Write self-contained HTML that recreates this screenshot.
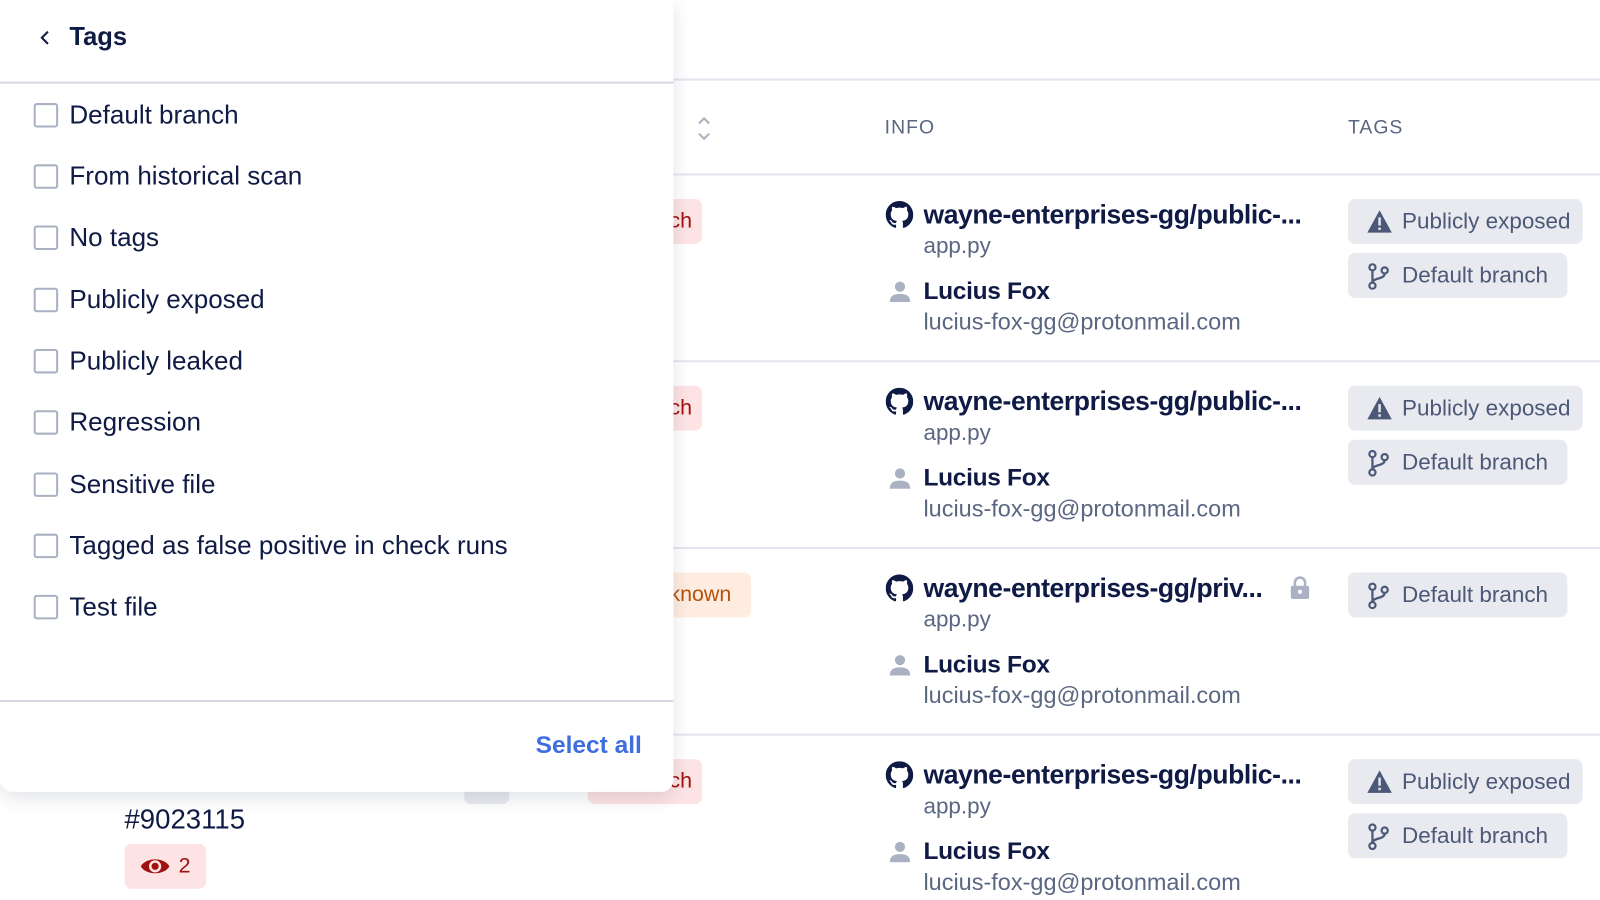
<!DOCTYPE html>
<html><head><meta charset="utf-8"><style>
*{margin:0;padding:0;box-sizing:border-box}
body{width:1600px;height:900px;background:#fff;font-family:"Liberation Sans",sans-serif;color:#0f1a45;position:relative;overflow:hidden}
#w{position:absolute;left:0;top:0;width:1568px;height:882px;transform:scale(1.0204);transform-origin:0 0}
.a{position:absolute;white-space:nowrap}
.hl{position:absolute;height:2px;background:#e3e6ee}
.th{font-size:19px;color:#5a6782;letter-spacing:1px}
.repo{font-size:26px;font-weight:bold;letter-spacing:-0.4px;color:#0f1a45}
.file{font-size:22px;color:#5a6782}
.name{font-size:24px;font-weight:bold;color:#0f1a45;letter-spacing:-0.3px}
.mail{font-size:23px;color:#5a6782}
.tag{position:absolute;height:44px;background:#e8eaef;border-radius:7px;font-size:22px;color:#4b5878;padding-left:53px;line-height:44px;white-space:nowrap}
.tag svg{position:absolute;left:18px;top:10px}
.badge{position:absolute;height:44px;border-radius:7px;font-size:21px;line-height:44px}
.panel{position:absolute;left:0;top:0;width:660px;height:776px;background:#fff;border-radius:0 0 12px 12px;box-shadow:0 6px 18px rgba(20,30,60,.12)}
.item{position:absolute;left:33px;font-size:25.5px;color:#0f1a45;height:26px;line-height:26px}
.item i{position:absolute;left:0;top:1px;width:24px;height:24px;border:2px solid #a9b1c3;border-radius:3px}
.item span{position:absolute;left:35px;top:0px;white-space:nowrap}
</style></head><body><div id="w">

<div class="hl" style="left:600px;top:77px;width:1000px"></div>
<div class="a th" style="left:867px;top:115px">INFO</div>
<div class="a th" style="left:1321px;top:115px">TAGS</div>
<svg class="a" style="left:682px;top:113px" width="16" height="26" viewBox="0 0 16 26"><path d="M3 8l5-5 5 5M3 18l5 5 5-5" fill="none" stroke="#a9b1c3" stroke-width="2"/></svg>
<div class="hl" style="left:600px;top:170px;width:1000px"></div>
<div class="hl" style="left:600px;top:353px;width:1000px"></div>
<div class="hl" style="left:600px;top:536px;width:1000px"></div>
<div class="hl" style="left:600px;top:719px;width:1000px"></div>

<div class="badge" style="left:576px;top:195px;width:112px;background:#fde3e3;color:#a01010;padding-left:80px">ch</div>
<div class="badge" style="left:576px;top:378px;width:112px;background:#fde3e3;color:#a01010;padding-left:80px">ch</div>
<div class="badge" style="left:576px;top:561px;width:160px;background:#fdecdf;color:#b5520c;padding-left:80px">known</div>
<div class="badge" style="left:576px;top:744px;width:112px;background:#fde3e3;color:#a01010;padding-left:80px">ch</div>
<div class="a" style="left:455px;top:752px;width:44px;height:36px;background:#e8eaef;border-radius:6px"></div>
<div class="a" style="left:122px;top:788px;font-size:27px;color:#0f1a45">#9023115</div>
<div class="badge" style="left:122px;top:827px;width:80px;background:#fde3e3;color:#a01010;padding-left:53px">2</div>
<svg class="a" style="left:137px;top:838px" width="30" height="22" viewBox="0 0 30 22"><path d="M1 11C6 2 24 2 29 11 24 20 6 20 1 11z" fill="#a01010"/><circle cx="15" cy="11" r="6" fill="#fde3e3"/><circle cx="15" cy="11" r="3.5" fill="#a01010"/></svg>

<!-- Row 1 -->
<svg class="a" style="left:868px;top:197px" width="27" height="27" viewBox="0 0 16 16"><path fill="#0f1a45" d="M8 0C3.58 0 0 3.58 0 8c0 3.54 2.29 6.53 5.47 7.59.4.07.55-.17.55-.38 0-.19-.01-.82-.01-1.49-2.01.37-2.53-.49-2.69-.94-.09-.23-.48-.94-.82-1.13-.28-.15-.68-.52-.01-.53.63-.01 1.08.58 1.23.82.72 1.21 1.87.87 2.33.66.07-.52.28-.87.51-1.070-1.78-.2-3.64-.89-3.64-3.95 0-.87.31-1.59.82-2.15-.08-.2-.36-1.02.08-2.12 0 0 .67-.21 2.2.82.64-.18 1.32-.27 2-.27.68 0 1.36.09 2 .27 1.53-1.04 2.2-.82 2.2-.82.44 1.1.16 1.92.08 2.12.51.56.82 1.27.82 2.15 0 3.07-1.87 3.75-3.65 3.95.29.25.54.73.54 1.48 0 1.07-.01 1.93-.01 2.2 0 .21.15.46.55.38A8.01 8.01 0 0016 8c0-4.42-3.58-8-8-8z"/></svg>
<div class="a repo" style="left:905px;top:195px">wayne-enterprises-gg/public-...</div>
<div class="a file" style="left:905px;top:228px">app.py</div>
<svg class="a" style="left:871px;top:275px" width="22" height="22" viewBox="0 0 22 22"><circle cx="11" cy="6" r="5" fill="#a9b1c3"/><path d="M1 21c0-6 4-8 10-8s10 2 10 8z" fill="#a9b1c3"/></svg>
<div class="a name" style="left:905px;top:272px">Lucius Fox</div>
<div class="a mail" style="left:905px;top:302px">lucius-fox-gg@protonmail.com</div>
<div class="tag" style="left:1321px;top:195px;width:230px"><svg width="26" height="24" viewBox="0 0 26 24"><path d="M13 1L25 23H1z" fill="#4b5878"/><rect x="11.8" y="8" width="2.4" height="8" fill="#e8eaef"/><rect x="11.8" y="18" width="2.4" height="2.4" fill="#e8eaef"/></svg>Publicly exposed</div>
<div class="tag" style="left:1321px;top:248px;width:215px"><svg width="24" height="26" viewBox="0 0 24 26"><g fill="none" stroke="#4b5878" stroke-width="2.2"><circle cx="6" cy="4" r="3"/><circle cx="6" cy="22" r="3"/><circle cx="18" cy="7" r="3"/><path d="M6 7v12M18 10c0 6-12 4-12 9"/></g></svg>Default branch</div>

<!-- Row 2 -->
<svg class="a" style="left:868px;top:380px" width="27" height="27" viewBox="0 0 16 16"><path fill="#0f1a45" d="M8 0C3.58 0 0 3.58 0 8c0 3.54 2.29 6.53 5.47 7.59.4.07.55-.17.55-.38 0-.19-.01-.82-.01-1.49-2.01.37-2.53-.49-2.69-.94-.09-.23-.48-.94-.82-1.13-.28-.15-.68-.52-.01-.53.63-.01 1.08.58 1.23.82.72 1.21 1.87.87 2.33.66.07-.52.28-.87.51-1.07-1.78-.2-3.64-.89-3.64-3.95 0-.87.31-1.59.82-2.15-.08-.2-.36-1.02.08-2.12 0 0 .67-.21 2.2.82.64-.18 1.32-.27 2-.27.68 0 1.36.09 2 .27 1.53-1.04 2.2-.82 2.2-.82.44 1.1.16 1.92.08 2.12.51.56.82 1.27.82 2.15 0 3.07-1.87 3.75-3.65 3.95.29.25.54.73.54 1.48 0 1.07-.01 1.93-.01 2.2 0 .21.15.46.55.38A8.01 8.01 0 0016 8c0-4.42-3.58-8-8-8z"/></svg>
<div class="a repo" style="left:905px;top:378px">wayne-enterprises-gg/public-...</div>
<div class="a file" style="left:905px;top:411px">app.py</div>
<svg class="a" style="left:871px;top:458px" width="22" height="22" viewBox="0 0 22 22"><circle cx="11" cy="6" r="5" fill="#a9b1c3"/><path d="M1 21c0-6 4-8 10-8s10 2 10 8z" fill="#a9b1c3"/></svg>
<div class="a name" style="left:905px;top:455px">Lucius Fox</div>
<div class="a mail" style="left:905px;top:485px">lucius-fox-gg@protonmail.com</div>
<div class="tag" style="left:1321px;top:378px;width:230px"><svg width="26" height="24" viewBox="0 0 26 24"><path d="M13 1L25 23H1z" fill="#4b5878"/><rect x="11.8" y="8" width="2.4" height="8" fill="#e8eaef"/><rect x="11.8" y="18" width="2.4" height="2.4" fill="#e8eaef"/></svg>Publicly exposed</div>
<div class="tag" style="left:1321px;top:431px;width:215px"><svg width="24" height="26" viewBox="0 0 24 26"><g fill="none" stroke="#4b5878" stroke-width="2.2"><circle cx="6" cy="4" r="3"/><circle cx="6" cy="22" r="3"/><circle cx="18" cy="7" r="3"/><path d="M6 7v12M18 10c0 6-12 4-12 9"/></g></svg>Default branch</div>

<!-- Row 3 -->
<svg class="a" style="left:868px;top:563px" width="27" height="27" viewBox="0 0 16 16"><path fill="#0f1a45" d="M8 0C3.58 0 0 3.58 0 8c0 3.54 2.29 6.53 5.47 7.59.4.07.55-.17.55-.38 0-.19-.01-.82-.01-1.49-2.01.37-2.53-.49-2.69-.94-.09-.23-.48-.94-.82-1.13-.28-.15-.68-.52-.01-.53.63-.01 1.08.58 1.23.82.72 1.21 1.87.87 2.33.66.07-.52.28-.87.51-1.07-1.78-.2-3.64-.89-3.64-3.95 0-.87.31-1.59.82-2.15-.08-.2-.36-1.02.08-2.12 0 0 .67-.21 2.2.82.64-.18 1.32-.27 2-.27.68 0 1.36.09 2 .27 1.53-1.04 2.2-.82 2.2-.82.44 1.1.16 1.92.08 2.12.51.56.82 1.27.82 2.15 0 3.07-1.87 3.75-3.65 3.95.29.25.54.73.54 1.48 0 1.07-.01 1.93-.01 2.2 0 .21.15.46.55.38A8.01 8.01 0 0016 8c0-4.42-3.58-8-8-8z"/></svg>
<div class="a repo" style="left:905px;top:561px">wayne-enterprises-gg/priv...</div>
<svg class="a" style="left:1264px;top:564px" width="20" height="24" viewBox="0 0 20 24"><path d="M5 10V7a5 5 0 0110 0v3" fill="none" stroke="#a9b1c3" stroke-width="2.5"/><rect x="1" y="10" width="18" height="13" rx="2" fill="#a9b1c3"/><circle cx="10" cy="16" r="2" fill="#fff"/></svg>
<div class="a file" style="left:905px;top:594px">app.py</div>
<svg class="a" style="left:871px;top:641px" width="22" height="22" viewBox="0 0 22 22"><circle cx="11" cy="6" r="5" fill="#a9b1c3"/><path d="M1 21c0-6 4-8 10-8s10 2 10 8z" fill="#a9b1c3"/></svg>
<div class="a name" style="left:905px;top:638px">Lucius Fox</div>
<div class="a mail" style="left:905px;top:668px">lucius-fox-gg@protonmail.com</div>
<div class="tag" style="left:1321px;top:561px;width:215px"><svg width="24" height="26" viewBox="0 0 24 26"><g fill="none" stroke="#4b5878" stroke-width="2.2"><circle cx="6" cy="4" r="3"/><circle cx="6" cy="22" r="3"/><circle cx="18" cy="7" r="3"/><path d="M6 7v12M18 10c0 6-12 4-12 9"/></g></svg>Default branch</div>

<!-- Row 4 -->
<svg class="a" style="left:868px;top:746px" width="27" height="27" viewBox="0 0 16 16"><path fill="#0f1a45" d="M8 0C3.58 0 0 3.58 0 8c0 3.54 2.29 6.53 5.47 7.59.4.07.55-.17.55-.38 0-.19-.01-.82-.01-1.49-2.01.37-2.53-.49-2.69-.94-.09-.23-.48-.94-.82-1.13-.28-.15-.68-.52-.01-.53.63-.01 1.08.58 1.23.82.72 1.21 1.87.87 2.33.66.07-.52.28-.87.51-1.07-1.78-.2-3.64-.89-3.64-3.95 0-.87.31-1.59.82-2.15-.08-.2-.36-1.02.08-2.12 0 0 .67-.21 2.2.82.64-.18 1.32-.27 2-.27.68 0 1.36.09 2 .27 1.53-1.04 2.2-.82 2.2-.82.44 1.1.16 1.92.08 2.12.51.56.82 1.27.82 2.15 0 3.07-1.87 3.75-3.65 3.95.29.25.54.73.54 1.48 0 1.07-.01 1.93-.01 2.2 0 .21.15.46.55.38A8.01 8.01 0 0016 8c0-4.42-3.58-8-8-8z"/></svg>
<div class="a repo" style="left:905px;top:744px">wayne-enterprises-gg/public-...</div>
<div class="a file" style="left:905px;top:777px">app.py</div>
<svg class="a" style="left:871px;top:824px" width="22" height="22" viewBox="0 0 22 22"><circle cx="11" cy="6" r="5" fill="#a9b1c3"/><path d="M1 21c0-6 4-8 10-8s10 2 10 8z" fill="#a9b1c3"/></svg>
<div class="a name" style="left:905px;top:821px">Lucius Fox</div>
<div class="a mail" style="left:905px;top:851px">lucius-fox-gg@protonmail.com</div>
<div class="tag" style="left:1321px;top:744px;width:230px"><svg width="26" height="24" viewBox="0 0 26 24"><path d="M13 1L25 23H1z" fill="#4b5878"/><rect x="11.8" y="8" width="2.4" height="8" fill="#e8eaef"/><rect x="11.8" y="18" width="2.4" height="2.4" fill="#e8eaef"/></svg>Publicly exposed</div>
<div class="tag" style="left:1321px;top:797px;width:215px"><svg width="24" height="26" viewBox="0 0 24 26"><g fill="none" stroke="#4b5878" stroke-width="2.2"><circle cx="6" cy="4" r="3"/><circle cx="6" cy="22" r="3"/><circle cx="18" cy="7" r="3"/><path d="M6 7v12M18 10c0 6-12 4-12 9"/></g></svg>Default branch</div>

<div class="panel">
  <svg class="a" style="left:38px;top:29px" width="12" height="16" viewBox="0 0 12 16"><path d="M9 2L3 8l6 6" fill="none" stroke="#0f1a45" stroke-width="2"/></svg>
  <div class="a" style="left:68px;top:22px;font-size:25px;font-weight:bold;color:#0f1a45">Tags</div>
  <div class="hl" style="left:0;top:80px;width:660px;background:#d5d9e3"></div>
  <div class="item" style="top:100px"><i></i><span>Default branch</span></div>
  <div class="item" style="top:160px"><i></i><span>From historical scan</span></div>
  <div class="item" style="top:220px"><i></i><span>No tags</span></div>
  <div class="item" style="top:281px"><i></i><span>Publicly exposed</span></div>
  <div class="item" style="top:341px"><i></i><span>Publicly leaked</span></div>
  <div class="item" style="top:401px"><i></i><span>Regression</span></div>
  <div class="item" style="top:462px"><i></i><span>Sensitive file</span></div>
  <div class="item" style="top:522px"><i></i><span>Tagged as false positive in check runs</span></div>
  <div class="item" style="top:582px"><i></i><span>Test file</span></div>
  <div class="hl" style="left:0;top:686px;width:660px;background:#d5d9e3"></div>
  <div class="a" style="right:31px;top:717px;font-size:24px;font-weight:bold;color:#3e6ee0">Select all</div>
</div>
</div></body></html>
